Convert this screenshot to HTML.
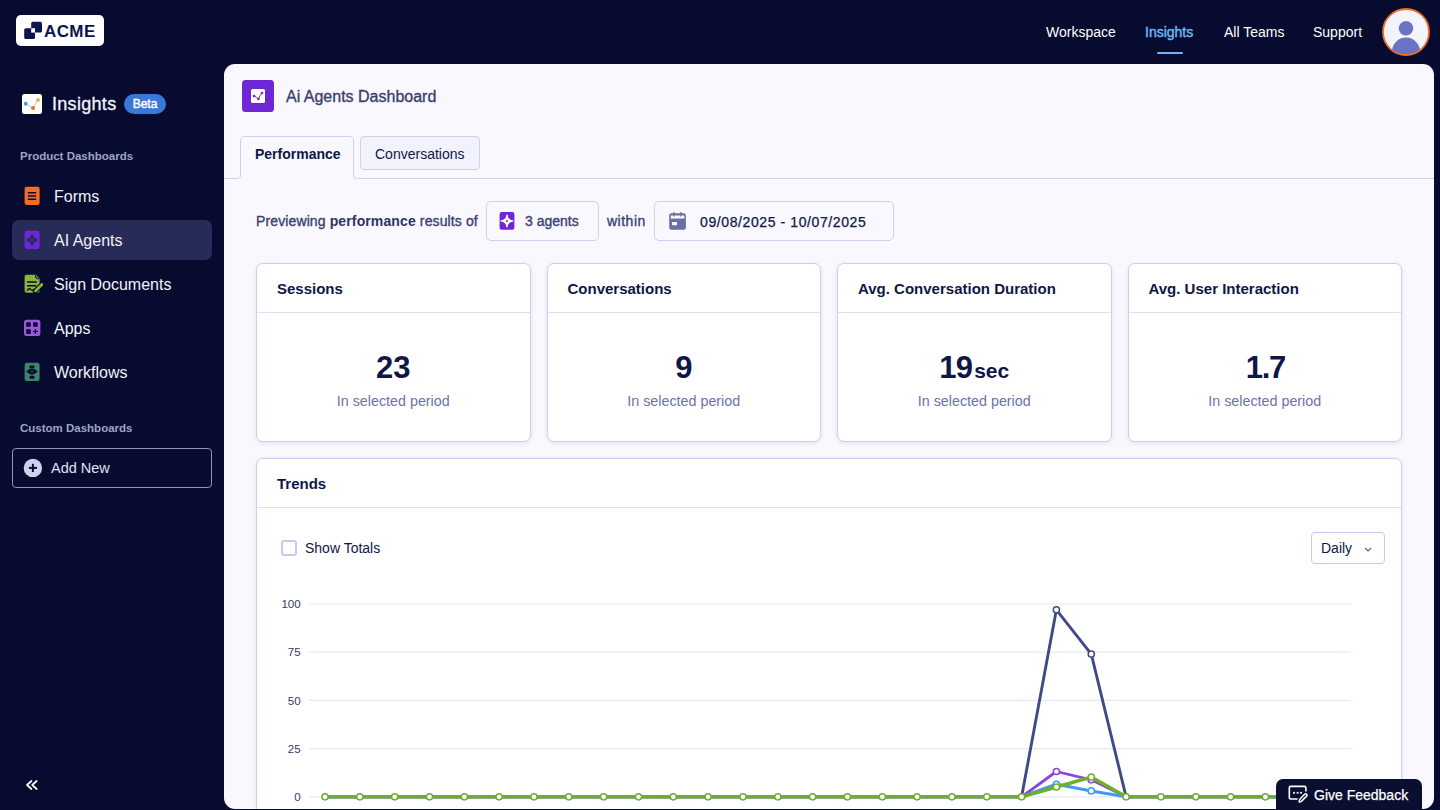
<!DOCTYPE html>
<html><head><meta charset="utf-8">
<style>
*{box-sizing:border-box;margin:0;padding:0}
html,body{width:1440px;height:810px;overflow:hidden;background:#060b2f;font-family:"Liberation Sans",sans-serif;}
.abs{position:absolute}
.logo{left:16px;top:15px;width:88px;height:31px;background:#fff;border-radius:5px}
.nav{top:22px;color:#fff;font-size:14px;line-height:20px;white-space:nowrap}
.side-t{color:#f2f3fb;font-size:16px;white-space:nowrap;line-height:20px}
.sec{color:#9ea3cc;font-size:11.5px;font-weight:bold;white-space:nowrap;line-height:16px}
.panel{left:224px;top:64px;width:1210px;height:745px;background:#f8f8fe;border-radius:11px;overflow:hidden}
.card{background:#fff;border:1px solid #ccd0ee;border-radius:7px;box-shadow:0 1px 4px rgba(30,35,90,0.10)}
.hl{left:0;width:100%;height:1px;background:#dde0f3}
.ct{color:#0f1747;font-weight:bold;font-size:15px;white-space:nowrap;line-height:20px}
.sub{color:#6c72aa;font-size:14.3px;white-space:nowrap;line-height:20px}
.val{color:#0f1747;font-weight:bold;font-size:31px;white-space:nowrap;line-height:36px}
.t14{font-size:14px;line-height:20px;white-space:nowrap}
.md{-webkit-text-stroke:0.35px currentColor}
</style></head>
<body>
<div class="abs logo">
  <svg class="abs" style="left:0;top:0" width="88" height="31" viewBox="0 0 88 31">
    <rect x="15.2" y="6.8" width="10.8" height="10.8" rx="1.6" fill="#0c1550"/>
    <rect x="8.2" y="13.2" width="10.8" height="10.8" rx="1.6" fill="#0c1550"/>
    <rect x="15.2" y="13.2" width="3.8" height="4.4" fill="#fff"/>
  </svg>
  <div class="abs" style="left:28px;top:6px;font-size:17px;font-weight:bold;color:#0c1550;line-height:20px;letter-spacing:0.4px;top:6.5px">ACME</div>
</div>
<div class="abs nav" style="left:1046px">Workspace</div>
<div class="abs nav" style="left:1145px;color:#6fb6f2;-webkit-text-stroke:0.45px #6fb6f2">Insights</div>
<div class="abs" style="left:1157px;top:51.5px;width:25.5px;height:2.2px;background:#6fb6f2;border-radius:1px"></div>
<div class="abs nav" style="left:1224px">All Teams</div>
<div class="abs nav" style="left:1313px">Support</div>
<svg class="abs" style="left:1376px;top:2px" width="60" height="60" viewBox="0 0 60 60">
  <defs><clipPath id="av"><circle cx="30" cy="30" r="23"/></clipPath></defs>
  <circle cx="30" cy="30" r="23" fill="#f4f5fc"/>
  <g clip-path="url(#av)" fill="#6c73c3"><circle cx="30" cy="26.3" r="7.2"/><circle cx="30" cy="49.6" r="14"/></g>
  <circle cx="30" cy="30" r="23" fill="none" stroke="#ec6e2a" stroke-width="1.8"/>
</svg>

<svg class="abs" style="left:22px;top:94px" width="20" height="20" viewBox="0 0 20 20">
<rect width="20" height="20" rx="2.5" fill="#fff"/>
<polyline points="3.7,9.7 11,14 16,6" fill="none" stroke="#c3c6e6" stroke-width="1"/>
<circle cx="3.7" cy="9.7" r="2" fill="#3d9bf5"/><circle cx="11" cy="14" r="2" fill="#ee6a2a"/><circle cx="16" cy="6" r="2" fill="#f0b73a"/>
</svg>
<div class="abs side-t" style="left:52px;top:92px;font-size:18px;line-height:24px;letter-spacing:0.3px;-webkit-text-stroke:0.3px #f2f3fb">Insights</div>
<div class="abs" style="left:124px;top:94px;width:42px;height:20px;background:#3a78d8;border-radius:10px;color:#fff;font-size:12px;text-align:center;line-height:20px;-webkit-text-stroke:0.45px #fff">Beta</div>
<div class="abs sec" style="left:20px;top:148px">Product Dashboards</div>

<div class="abs" style="left:12px;top:220px;width:200px;height:40px;background:#272b57;border-radius:7px"></div>
<svg class="abs" style="left:24px;top:186px" width="16" height="20" viewBox="0 0 16 20">
<rect x="0.6" y="0.8" width="15" height="18.2" rx="2.2" fill="#ee6f2d"/>
<g stroke="#060b2f" stroke-width="1.6" stroke-linecap="round"><line x1="4.4" y1="6.7" x2="11.6" y2="6.7"/><line x1="4.4" y1="10" x2="11.6" y2="10"/><line x1="4.4" y1="13.3" x2="11.6" y2="13.3"/></g>
</svg><svg class="abs" style="left:24px;top:230px" width="16" height="20" viewBox="0 0 16 20">
<rect x="0.6" y="0.8" width="15" height="18.2" rx="2.2" fill="#6f26d6"/>
<path d="M8 4.3 Q8.9 8.9 13.8 10 Q8.9 11.1 8 15.8 Q7.1 11.1 2.2 10 Q7.1 8.9 8 4.3Z" fill="#272b57" stroke="#272b57" stroke-width="1" stroke-linejoin="round"/>
<circle cx="8" cy="10" r="1.1" fill="#6f26d6"/>
</svg><svg class="abs" style="left:24px;top:274px" width="20" height="20" viewBox="0 0 20 20">
<path d="M2.6 0.8 H11.6 L15.6 4.8 V16.7 Q15.6 18.7 13.6 18.7 H2.6 Q0.6 18.7 0.6 16.7 V2.8 Q0.6 0.8 2.6 0.8Z" fill="#8ab83a"/>
<path d="M11.4 1.4 Q11.2 4.6 15 5" fill="none" stroke="#060b2f" stroke-width="1.1"/>
<g stroke="#060b2f" stroke-width="1.5" stroke-linecap="round"><line x1="3.6" y1="8.1" x2="12.4" y2="8.1"/><line x1="3.6" y1="11.8" x2="11.8" y2="11.8"/></g>
<path d="M3.4 16.2 Q5.4 13.6 6.6 15.3 Q7.8 17 10.2 15.2" fill="none" stroke="#060b2f" stroke-width="1.4" stroke-linecap="round"/>
<line x1="18.2" y1="10.2" x2="11.2" y2="17.2" stroke="#060b2f" stroke-width="5" stroke-linecap="round"/>
<line x1="17.9" y1="10.5" x2="11.4" y2="17" stroke="#8ab83a" stroke-width="2.6" stroke-linecap="round"/>
</svg><svg class="abs" style="left:24px;top:319px" width="17" height="18" viewBox="0 0 17 18">
<rect x="0" y="0.7" width="16.4" height="16.4" rx="2.5" fill="#9b59d8"/>
<g fill="#060b2f"><rect x="2.2" y="3.2" width="4.6" height="4.6" rx="0.6"/><rect x="9.1" y="3.2" width="4.6" height="4.6" rx="0.6"/><rect x="2.2" y="10.3" width="4.6" height="4.6" rx="0.6"/></g>
<g stroke="#060b2f" stroke-width="1.2"><line x1="11.4" y1="10.1" x2="11.4" y2="14.9"/><line x1="9" y1="12.5" x2="13.8" y2="12.5"/></g>
</svg><svg class="abs" style="left:24px;top:362px" width="16" height="20" viewBox="0 0 16 20">
<rect x="0.6" y="0.8" width="15" height="18.2" rx="2.2" fill="#3c8566"/>
<g fill="#060b2f">
<rect x="5.4" y="3.4" width="5.2" height="2.8" rx="1.4"/>
<rect x="5.4" y="13.9" width="5.2" height="2.8" rx="1.4"/>
<path d="M2.2 9.5 L5 7.6 L7.2 7.6 L7.2 11.4 L5 11.4Z"/>
<path d="M13.8 9.5 L11 7.6 L8.8 7.6 L8.8 11.4 L11 11.4Z"/>
<rect x="5" y="6.9" width="6" height="1.2"/><rect x="5" y="10.9" width="6" height="1.2"/>
<rect x="7.5" y="5.5" width="1" height="9"/>
</g>
</svg>
<div class="abs side-t" style="left:54px;top:187px">Forms</div>
<div class="abs side-t" style="left:54px;top:231px">AI Agents</div>
<div class="abs side-t" style="left:54px;top:275px">Sign Documents</div>
<div class="abs side-t" style="left:54px;top:319px">Apps</div>
<div class="abs side-t" style="left:54px;top:363px">Workflows</div>

<div class="abs sec" style="left:20px;top:420px">Custom Dashboards</div>
<div class="abs" style="left:12px;top:448px;width:200px;height:40px;border:1px solid #8e92b4;border-radius:4px"></div>
<svg class="abs" style="left:23px;top:458px" width="20" height="20" viewBox="0 0 20 20">
<circle cx="9.9" cy="9.9" r="9.2" fill="#cfd2ef"/>
<g stroke="#060b2f" stroke-width="2"><line x1="9.9" y1="5.8" x2="9.9" y2="14"/><line x1="5.8" y1="9.9" x2="14" y2="9.9"/></g>
</svg>
<div class="abs side-t" style="left:51px;top:458px;font-size:14.5px;color:#dfe1f5">Add New</div>
<svg class="abs" style="left:24px;top:778px" width="16" height="14" viewBox="0 0 16 14">
<g fill="none" stroke="#fff" stroke-width="1.7" stroke-linecap="round" stroke-linejoin="round">
<polyline points="7.5,3 3,7 7.5,11"/><polyline points="12.7,3 8.2,7 12.7,11"/></g>
</svg>

<div class="abs panel">
  <svg class="abs" style="left:18px;top:16px" width="32" height="32" viewBox="0 0 32 32">
<rect x="0" y="0" width="32" height="32" rx="3.5" fill="#6f27d6"/>
<rect x="9" y="9" width="14" height="14" rx="1.5" fill="#fff"/>
<path d="M12 16 Q14.5 17.2 16.4 19 Q18 15 20 13" fill="none" stroke="#6f27d6" stroke-width="1"/>
<circle cx="12" cy="16" r="1.3" fill="#6f27d6"/><circle cx="16.4" cy="19" r="1.3" fill="#6f27d6"/><circle cx="20" cy="13" r="1.3" fill="#6f27d6"/>
</svg>
  <div class="abs md" style="left:62px;top:23px;font-size:16px;color:#3b406a;line-height:20px;white-space:nowrap">Ai Agents Dashboard</div>
  <svg class="abs" style="left:0;top:0" width="1210" height="120" viewBox="0 0 1210 120"><path d="M0 114.5 H13.5 Q16.5 114.5 16.5 111.5 V77 Q16.5 72.5 21 72.5 H125 Q129.5 72.5 129.5 77 V111.5 Q129.5 114.5 132.5 114.5 H1210" fill="none" stroke="#cdd1ee" stroke-width="1"/></svg>
  <div class="abs t14" style="left:31px;top:80px;font-weight:bold;color:#0f1747">Performance</div>
  <div class="abs" style="left:136px;top:72px;width:120px;height:34px;background:#f1f2fb;border:1px solid #cdd1ee;border-radius:4px"></div>
  <div class="abs t14" style="left:151px;top:80px;color:#0f1747">Conversations</div>

  <div class="abs t14" style="left:32px;top:147px;color:#3b4170;letter-spacing:0.12px"><span class="md">Previewing</span> <b style="color:#2d3463">performance</b> <span class="md">results of</span></div>
  <div class="abs" style="left:262px;top:137px;width:113px;height:40px;border:1px solid #cdd1ee;border-radius:5px"></div>
  <svg class="abs" style="left:275px;top:148px" width="16" height="19" viewBox="0 0 16 19">
<rect x="0.6" y="0" width="14.8" height="17.8" rx="2" fill="#6f26d6"/>
<path d="M8 3 Q8.6 8.3 13.9 8.9 Q8.6 9.5 8 14.9 Q7.4 9.5 2.1 8.9 Q7.4 8.3 8 3Z" fill="#fff" stroke="#fff" stroke-width="1.2" stroke-linejoin="round"/>
<circle cx="8" cy="8.9" r="1" fill="#6f26d6"/>
</svg>
  <div class="abs t14 md" style="left:301px;top:147px;color:#3b4170">3 agents</div>
  <div class="abs t14 md" style="left:383px;top:147px;color:#3b4170;letter-spacing:0.5px">within</div>
  <div class="abs" style="left:430px;top:137px;width:240px;height:40px;border:1px solid #cdd1ee;border-radius:5px"></div>
  <svg class="abs" style="left:444px;top:147px" width="20" height="20" viewBox="0 0 20 20">
<rect x="1.2" y="2.2" width="16.7" height="16.5" rx="2.2" fill="#6a70a7"/>
<rect x="2.8" y="4.5" width="13.5" height="3" fill="#fff"/>
<g stroke="#6a70a7" stroke-width="1.4" stroke-linecap="round"><line x1="6" y1="1.6" x2="6" y2="5"/><line x1="12.9" y1="1.6" x2="12.9" y2="5"/></g>
<rect x="4.1" y="10.9" width="4.9" height="3.4" rx="0.4" fill="#fff"/>
</svg>
  <div class="abs t14 md" style="left:476px;top:147.5px;color:#0f1747;letter-spacing:0.6px;-webkit-text-stroke:0.25px #0f1747">09/08/2025 - 10/07/2025</div>

  <div class="abs card" style="left:32px;top:199px;width:274.5px;height:179px">
    <div class="abs hl" style="top:48px"></div>
    <div class="abs ct" style="left:20px;top:14.5px">Sessions</div>
    <div class="abs val" style="left:0;top:86px;width:100%;text-align:center">23</div>
    <div class="abs sub" style="left:0;top:127px;width:100%;text-align:center">In selected period</div>
  </div>
<div class="abs card" style="left:322.5px;top:199px;width:274.5px;height:179px">
    <div class="abs hl" style="top:48px"></div>
    <div class="abs ct" style="left:20px;top:14.5px">Conversations</div>
    <div class="abs val" style="left:0;top:86px;width:100%;text-align:center">9</div>
    <div class="abs sub" style="left:0;top:127px;width:100%;text-align:center">In selected period</div>
  </div>
<div class="abs card" style="left:613px;top:199px;width:274.5px;height:179px">
    <div class="abs hl" style="top:48px"></div>
    <div class="abs ct" style="left:20px;top:14.5px">Avg. Conversation Duration</div>
    <div class="abs val" style="left:0;top:86px;width:100%;text-align:center"><span style="letter-spacing:-0.8px">19</span><span style="font-size:21px;margin-left:2px">sec</span></div>
    <div class="abs sub" style="left:0;top:127px;width:100%;text-align:center">In selected period</div>
  </div>
<div class="abs card" style="left:903.5px;top:199px;width:274.5px;height:179px">
    <div class="abs hl" style="top:48px"></div>
    <div class="abs ct" style="left:20px;top:14.5px">Avg. User Interaction</div>
    <div class="abs val" style="left:0;top:86px;width:100%;text-align:center"><span style="letter-spacing:-1.3px;margin-right:-1.3px">1.7</span></div>
    <div class="abs sub" style="left:0;top:127px;width:100%;text-align:center">In selected period</div>
  </div>

  <div class="abs card" style="left:32px;top:394px;width:1146px;height:420px">
    <div class="abs hl" style="top:48px"></div>
    <div class="abs ct" style="left:20px;top:14.5px">Trends</div>
    <div class="abs" style="left:24px;top:81px;width:16px;height:16px;border:2px solid #c8cbee;border-radius:3px"></div>
    <div class="abs t14" style="left:48px;top:79px;color:#0f1747">Show Totals</div>
    <div class="abs" style="left:1054px;top:73px;width:74px;height:32px;border:1px solid #c8cbee;border-radius:4px"></div>
    <div class="abs t14" style="left:1064px;top:79px;color:#0f1747">Daily</div>
    <svg class="abs" style="left:1106px;top:86.5px" width="10" height="8" viewBox="0 0 10 8"><polyline points="2.2,2 5.1,4.9 8,2" fill="none" stroke="#5a60a0" stroke-width="1.2"/></svg>
    <svg class="abs" style="left:-1px;top:-1px" width="1146" height="420" viewBox="0 0 1146 420">
    <line x1="53" y1="146.0" x2="1095" y2="146.0" stroke="#e7e8f6" stroke-width="1.2"/>
<text x="44.60000000000002" y="150.1" text-anchor="end" font-size="11.5" fill="#333a6a" font-family="Liberation Sans">100</text>
<line x1="53" y1="194.2" x2="1095" y2="194.2" stroke="#e7e8f6" stroke-width="1.2"/>
<text x="44.60000000000002" y="198.3" text-anchor="end" font-size="11.5" fill="#333a6a" font-family="Liberation Sans">75</text>
<line x1="53" y1="242.4" x2="1095" y2="242.4" stroke="#e7e8f6" stroke-width="1.2"/>
<text x="44.60000000000002" y="246.5" text-anchor="end" font-size="11.5" fill="#333a6a" font-family="Liberation Sans">50</text>
<line x1="53" y1="290.6" x2="1095" y2="290.6" stroke="#e7e8f6" stroke-width="1.2"/>
<text x="44.60000000000002" y="294.7" text-anchor="end" font-size="11.5" fill="#333a6a" font-family="Liberation Sans">25</text>
<line x1="53" y1="338.8" x2="1095" y2="338.8" stroke="#e7e8f6" stroke-width="1.2"/>
<text x="44.60000000000002" y="342.9" text-anchor="end" font-size="11.5" fill="#333a6a" font-family="Liberation Sans">0</text>
<polyline points="69.0,338.8 103.8,338.8 138.7,338.8 173.5,338.8 208.3,338.8 243.1,338.8 278.0,338.8 312.8,338.8 347.6,338.8 382.5,338.8 417.3,338.8 452.1,338.8 487.0,338.8 521.8,338.8 556.6,338.8 591.4,338.8 626.3,338.8 661.1,338.8 695.9,338.8 730.8,338.8 765.6,338.8 800.4,151.8 835.3,196.1 870.1,338.8 904.9,338.8 939.8,338.8 974.6,338.8 1009.4,338.8 1044.2,338.8 1079.1,338.8" fill="none" stroke="#3f4a87" stroke-width="2.9" stroke-linejoin="round"/>
<circle cx="800.4" cy="151.8" r="3.1" fill="#fff" stroke="#3f4a87" stroke-width="1.5"/>
<circle cx="835.3" cy="196.1" r="3.1" fill="#fff" stroke="#3f4a87" stroke-width="1.5"/>
<polyline points="69.0,338.8 103.8,338.8 138.7,338.8 173.5,338.8 208.3,338.8 243.1,338.8 278.0,338.8 312.8,338.8 347.6,338.8 382.5,338.8 417.3,338.8 452.1,338.8 487.0,338.8 521.8,338.8 556.6,338.8 591.4,338.8 626.3,338.8 661.1,338.8 695.9,338.8 730.8,338.8 765.6,338.8 800.4,313.5 835.3,321.8 870.1,338.8 904.9,338.8 939.8,338.8 974.6,338.8 1009.4,338.8 1044.2,338.8 1079.1,338.8" fill="none" stroke="#8a45e0" stroke-width="2.8" stroke-linejoin="round"/>
<circle cx="800.4" cy="313.5" r="3.1" fill="#fff" stroke="#8a45e0" stroke-width="1.5"/>
<circle cx="835.3" cy="321.8" r="3.1" fill="#fff" stroke="#8a45e0" stroke-width="1.5"/>
<polyline points="69.0,338.8 103.8,338.8 138.7,338.8 173.5,338.8 208.3,338.8 243.1,338.8 278.0,338.8 312.8,338.8 347.6,338.8 382.5,338.8 417.3,338.8 452.1,338.8 487.0,338.8 521.8,338.8 556.6,338.8 591.4,338.8 626.3,338.8 661.1,338.8 695.9,338.8 730.8,338.8 765.6,338.8 800.4,326.3 835.3,332.9 870.1,338.8 904.9,338.8 939.8,338.8 974.6,338.8 1009.4,338.8 1044.2,338.8 1079.1,338.8" fill="none" stroke="#3d9bf5" stroke-width="3.1" stroke-linejoin="round"/>
<circle cx="800.4" cy="326.3" r="3.1" fill="#fff" stroke="#3d9bf5" stroke-width="1.5"/>
<circle cx="835.3" cy="332.9" r="3.1" fill="#fff" stroke="#3d9bf5" stroke-width="1.5"/>
<polyline points="69.0,338.8 103.8,338.8 138.7,338.8 173.5,338.8 208.3,338.8 243.1,338.8 278.0,338.8 312.8,338.8 347.6,338.8 382.5,338.8 417.3,338.8 452.1,338.8 487.0,338.8 521.8,338.8 556.6,338.8 591.4,338.8 626.3,338.8 661.1,338.8 695.9,338.8 730.8,338.8 765.6,338.8 800.4,329.0 835.3,319.1 870.1,338.8 904.9,338.8 939.8,338.8 974.6,338.8 1009.4,338.8 1044.2,338.8 1079.1,338.8" fill="none" stroke="#72ad2c" stroke-width="3.4" stroke-linejoin="round"/>
<circle cx="69.0" cy="338.8" r="3.1" fill="#fff" stroke="#72ad2c" stroke-width="1.5"/>
<circle cx="103.8" cy="338.8" r="3.1" fill="#fff" stroke="#72ad2c" stroke-width="1.5"/>
<circle cx="138.7" cy="338.8" r="3.1" fill="#fff" stroke="#72ad2c" stroke-width="1.5"/>
<circle cx="173.5" cy="338.8" r="3.1" fill="#fff" stroke="#72ad2c" stroke-width="1.5"/>
<circle cx="208.3" cy="338.8" r="3.1" fill="#fff" stroke="#72ad2c" stroke-width="1.5"/>
<circle cx="243.1" cy="338.8" r="3.1" fill="#fff" stroke="#72ad2c" stroke-width="1.5"/>
<circle cx="278.0" cy="338.8" r="3.1" fill="#fff" stroke="#72ad2c" stroke-width="1.5"/>
<circle cx="312.8" cy="338.8" r="3.1" fill="#fff" stroke="#72ad2c" stroke-width="1.5"/>
<circle cx="347.6" cy="338.8" r="3.1" fill="#fff" stroke="#72ad2c" stroke-width="1.5"/>
<circle cx="382.5" cy="338.8" r="3.1" fill="#fff" stroke="#72ad2c" stroke-width="1.5"/>
<circle cx="417.3" cy="338.8" r="3.1" fill="#fff" stroke="#72ad2c" stroke-width="1.5"/>
<circle cx="452.1" cy="338.8" r="3.1" fill="#fff" stroke="#72ad2c" stroke-width="1.5"/>
<circle cx="487.0" cy="338.8" r="3.1" fill="#fff" stroke="#72ad2c" stroke-width="1.5"/>
<circle cx="521.8" cy="338.8" r="3.1" fill="#fff" stroke="#72ad2c" stroke-width="1.5"/>
<circle cx="556.6" cy="338.8" r="3.1" fill="#fff" stroke="#72ad2c" stroke-width="1.5"/>
<circle cx="591.4" cy="338.8" r="3.1" fill="#fff" stroke="#72ad2c" stroke-width="1.5"/>
<circle cx="626.3" cy="338.8" r="3.1" fill="#fff" stroke="#72ad2c" stroke-width="1.5"/>
<circle cx="661.1" cy="338.8" r="3.1" fill="#fff" stroke="#72ad2c" stroke-width="1.5"/>
<circle cx="695.9" cy="338.8" r="3.1" fill="#fff" stroke="#72ad2c" stroke-width="1.5"/>
<circle cx="730.8" cy="338.8" r="3.1" fill="#fff" stroke="#72ad2c" stroke-width="1.5"/>
<circle cx="765.6" cy="338.8" r="3.1" fill="#fff" stroke="#72ad2c" stroke-width="1.5"/>
<circle cx="800.4" cy="329.0" r="3.1" fill="#fff" stroke="#72ad2c" stroke-width="1.5"/>
<circle cx="835.3" cy="319.1" r="3.1" fill="#fff" stroke="#72ad2c" stroke-width="1.5"/>
<circle cx="870.1" cy="338.8" r="3.1" fill="#fff" stroke="#72ad2c" stroke-width="1.5"/>
<circle cx="904.9" cy="338.8" r="3.1" fill="#fff" stroke="#72ad2c" stroke-width="1.5"/>
<circle cx="939.8" cy="338.8" r="3.1" fill="#fff" stroke="#72ad2c" stroke-width="1.5"/>
<circle cx="974.6" cy="338.8" r="3.1" fill="#fff" stroke="#72ad2c" stroke-width="1.5"/>
<circle cx="1009.4" cy="338.8" r="3.1" fill="#fff" stroke="#72ad2c" stroke-width="1.5"/>
<circle cx="1044.2" cy="338.8" r="3.1" fill="#fff" stroke="#72ad2c" stroke-width="1.5"/>
<circle cx="1079.1" cy="338.8" r="3.1" fill="#fff" stroke="#72ad2c" stroke-width="1.5"/>
    </svg>
  </div>
</div>
<div class="abs" style="left:1276px;top:779px;width:146px;height:40px;background:#0a0e30;border-radius:7px 7px 0 0"></div>
<svg class="abs" style="left:1288px;top:785px" width="20" height="18" viewBox="0 0 20 18">
<path d="M9.6 14 H2.8 Q1.3 14 1.3 12.5 V2.9 Q1.3 1.4 2.8 1.4 H16.4 Q17.9 1.4 17.9 2.9 V6.6" fill="none" stroke="#fff" stroke-width="1.6"/>
<g fill="#fff"><rect x="5.1" y="6.9" width="1.8" height="1.8"/><rect x="8.7" y="6.9" width="1.8" height="1.8"/><rect x="12.1" y="6.9" width="1.8" height="1.8"/></g>
<path d="M16.6 9.2 Q17.6 8.2 18.6 9.2 Q19.5 10.2 18.6 11.1 L13.6 16.1 Q12.6 17 11.3 16.9 Q10.9 15.7 11.8 14.3 Z" fill="none" stroke="#fff" stroke-width="1.5" stroke-linejoin="round"/>
</svg>
<div class="abs t14" style="left:1314px;top:784.5px;color:#fff;-webkit-text-stroke:0.25px #fff">Give Feedback</div>
</body></html>
